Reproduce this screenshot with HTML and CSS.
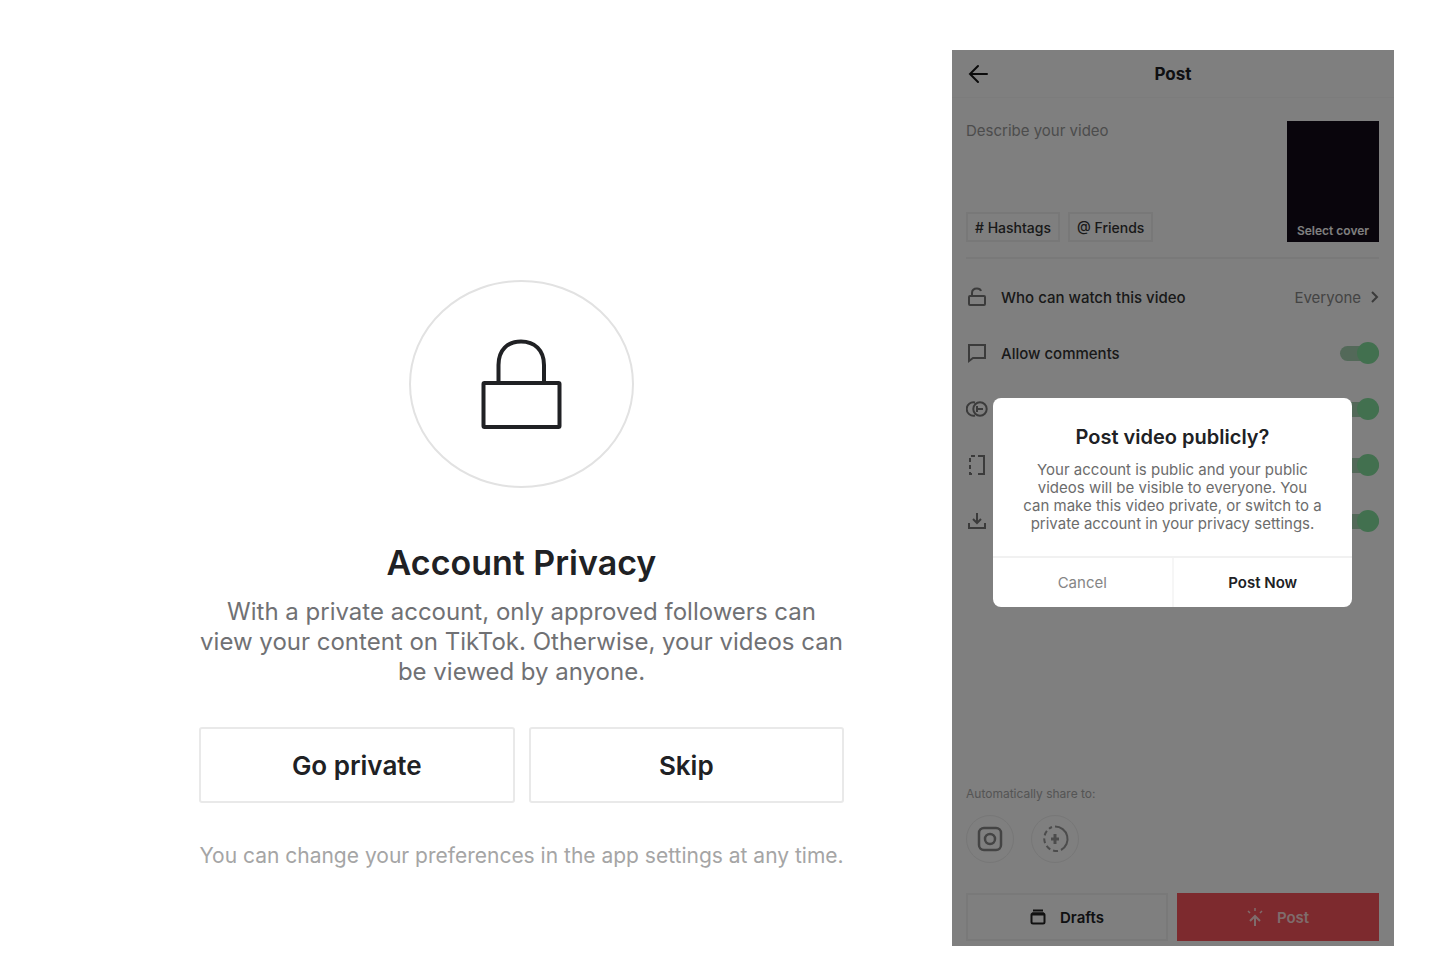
FILE: index.html
```html
<!DOCTYPE html>
<html lang="en">
<head>
<meta charset="utf-8">
<meta name="viewport" content="width=device-width, initial-scale=1">
<title>Account Privacy</title>
<link rel="stylesheet" href="styles.css">
</head>
<body>
<main class="page">
  <section class="privacy">
    <svg class="privacy-icon" viewBox="0 0 226 210" fill="none" aria-hidden="true">
      <ellipse cx="112.500" cy="105" rx="111.500" ry="103" stroke="#e2e2e2" stroke-width="2"/>
      <path d="M89.500 103V86C89.500 71 98.500 62.500 112 62.500S135 71 135 86V103" stroke="#202124" stroke-width="4"/>
      <rect x="74.500" y="104" width="76" height="44" rx="1" stroke="#202124" stroke-width="4"/>
    </svg>
    <h1 class="privacy-title">Account Privacy</h1>
    <p class="privacy-text">With a private account, only approved followers can<br>view your content on TikTok. Otherwise, your videos can<br>be viewed by anyone.</p>
    <div class="privacy-actions">
      <button class="choice" type="button">Go private</button>
      <button class="choice" type="button">Skip</button>
    </div>
    <p class="privacy-note">You can change your preferences in the app settings at any time.</p>
  </section>

  <section class="phone">
    <header class="bar">
      <button class="back" type="button" aria-label="Back">
        <svg width="22" height="22" viewBox="0 0 22 22" fill="none" stroke="#161616" stroke-width="2" stroke-linecap="round"><path d="M11 3L3 11L11 19M3 11H20"/></svg>
      </button>
      <h2 class="bar-title">Post</h2>
    </header>

    <div class="compose">
      <div class="compose-main">
        <textarea class="describe" aria-label="Describe your video" placeholder="Describe your video"></textarea>
        <div class="chips">
          <button class="chip" type="button"># Hashtags</button>
          <button class="chip" type="button">@ Friends</button>
        </div>
      </div>
      <button class="cover" type="button">Select cover</button>
    </div>

    <div class="settings">
      <button class="row" type="button">
        <svg class="row-icon" viewBox="0 0 22 22"><rect x="3" y="10" width="16" height="9" rx="1"/><path d="M6 10V7C6 3.500 8.500 2.500 11 2.500S14.500 3.500 15 5"/></svg>
        <span class="row-label">Who can watch this video</span>
        <span class="row-value">Everyone</span>
        <svg class="chevron" viewBox="0 0 8 14"><path d="M1 2L6 7L1 12"/></svg>
      </button>
      <label class="row">
        <svg class="row-icon" viewBox="0 0 22 22"><path d="M3 3H19V16H7L3 19Z"/></svg>
        <span class="row-label">Allow comments</span>
        <input class="toggle" type="checkbox" checked>
      </label>
      <div class="row">
        <svg class="row-icon" viewBox="0 0 22 22"><path d="M9 4.500A6.700 6.700 0 1 0 9 17.500M14 4.300A6.700 6.700 0 1 0 14 17.700A6.700 6.700 0 1 0 14 4.300M11 8V14M12 11H17"/></svg>
        <span class="row-label"></span>
        <input class="toggle" type="checkbox" aria-label="Duet" checked>
      </div>
      <div class="row">
        <svg class="row-icon" viewBox="0 0 22 22"><path d="M12 2H18V20H12"/><path stroke-dasharray="4 3" d="M9 2H4V20H9"/></svg>
        <span class="row-label"></span>
        <input class="toggle" type="checkbox" aria-label="Stitch" checked>
      </div>
      <div class="row">
        <svg class="row-icon" viewBox="0 0 22 22"><path d="M11 3V13M7 9L11 13L15 9M3 13V18H19V13"/></svg>
        <span class="row-label"></span>
        <input class="toggle" type="checkbox" aria-label="Save to device" checked>
      </div>
    </div>

    <div class="share">
      <p class="share-title">Automatically share to:</p>
      <div class="share-list">
        <button class="share-item" type="button" aria-label="Instagram">
          <svg width="28" height="28" viewBox="0 0 28 28" fill="none" stroke="#888" stroke-width="2.500"><rect x="3" y="3" width="22" height="22" rx="5"/><circle cx="14" cy="14" r="5"/></svg>
        </button>
        <button class="share-item" type="button" aria-label="Stories">
          <svg width="30" height="30" viewBox="0 0 30 30" fill="none" stroke="#999" stroke-width="2"><path d="M15 2.500A12.500 12.500 0 0 1 21 26"/><path stroke-dasharray="5 3" d="M18 27A12.500 12.500 0 0 1 12 3"/><path d="M15 10V20M11 15H19" stroke-width="3"/></svg>
        </button>
      </div>
    </div>

    <footer class="foot">
      <button class="foot-btn drafts" type="button">
        <svg width="16" height="16" viewBox="0 0 16 16" fill="none" stroke="#222" stroke-width="2"><path d="M3 1.500H13" /><rect x="1.500" y="4.500" width="13" height="10" rx="1.500"/><path d="M2 5H14" stroke-width="3"/></svg>
        Drafts
      </button>
      <button class="foot-btn publish" type="button">
        <svg width="16" height="20" viewBox="0 0 16 20" fill="none" stroke="#ffd8d8" stroke-width="2"><path d="M8 19V9M3 14L8 9L13 14"/><path d="M8 1V4M1 4L3 6M15 4L13 6" stroke-width="1.500"/></svg>
        Post
      </button>
    </footer>

    <div class="scrim"></div>
    <div class="dialog" role="dialog" aria-labelledby="dialog-title">
      <div class="dialog-body">
        <h2 class="dialog-title" id="dialog-title">Post video publicly?</h2>
        <p class="dialog-text">Your account is public and your public<br>videos will be visible to everyone. You<br>can make this video private, or switch to a<br>private account in your privacy settings.</p>
      </div>
      <div class="dialog-actions">
        <button class="dialog-btn" type="button">Cancel</button>
        <button class="dialog-btn dialog-btn-main" type="button">Post Now</button>
      </div>
    </div>
  </section>
</main>
</body>
</html>
```

FILE: styles.css
```css
* { box-sizing: border-box; }

body {
  margin: 0;
  background: #fff;
  color: #202124;
  font-family: Inter, "Liberation Sans", sans-serif;
}

h1, h2, p { margin: 0; }

button {
  margin: 0;
  padding: 0;
  border: 0;
  background: none;
  color: inherit;
  font: inherit;
}

.page {
  display: grid;
  grid-template-columns: 645fr 442fr;
  gap: 108px;
  min-height: 100vh;
  padding: 50px 36px 34px 199px;
}

/* Account privacy prompt */
.privacy {
  display: flex;
  flex-direction: column;
  align-items: center;
  padding-top: 229px;
  text-align: center;
}

.privacy-icon { width: 226px; height: 210px; }

.privacy-title {
  margin-top: 54px;
  font-size: 34px;
  font-weight: 600;
  line-height: 40px;
}

.privacy-text {
  margin-top: 14px;
  color: #707174;
  font-size: 24px;
  line-height: 30px;
  white-space: nowrap;
}

.privacy-actions {
  display: flex;
  gap: 14px;
  width: 100%;
  margin-top: 40px;
}

.choice {
  flex: 1;
  height: 76px;
  border: 2px solid #e9e9e9;
  border-radius: 3px;
  font-size: 26px;
  font-weight: 600;
}

.privacy-note {
  margin-top: 38px;
  color: #a5a5a5;
  font-size: 21px;
  line-height: 30px;
  white-space: nowrap;
}

/* Post screen */
.phone {
  position: relative;
  display: flex;
  flex-direction: column;
  background: #fefefe;
}

.bar {
  display: grid;
  grid-template-columns: 22px 1fr 22px;
  align-items: center;
  height: 48px;
  padding: 0 15px;
  border-bottom: 1px solid #f8f8f8;
}

.back { height: 22px; }

.bar-title {
  font-size: 17px;
  font-weight: 700;
  text-align: center;
}

.compose {
  display: flex;
  margin: 23px 15px 0 14px;
  padding-bottom: 15px;
  border-bottom: 2px solid #f2f2f2;
}

.compose-main {
  display: flex;
  flex: 1;
  flex-direction: column;
}

.describe {
  flex: 1;
  padding: 0;
  border: 0;
  background: none;
  font: 15px/20px Inter, "Liberation Sans", sans-serif;
  resize: none;
}

.describe::placeholder { color: #999; }

.chips { display: flex; gap: 8px; }

.chip {
  height: 30px;
  padding: 0 7px;
  border: 2px solid #f1f1f1;
  color: #333;
  font-size: 14px;
  font-weight: 500;
}

.cover {
  display: flex;
  align-items: flex-end;
  justify-content: center;
  width: 92px;
  height: 121px;
  padding-bottom: 4px;
  background: #120a18;
  color: #fff;
  font-size: 12px;
  font-weight: 600;
}

.settings { padding: 10px 15px 0 14px; }

.row {
  display: flex;
  align-items: center;
  width: 100%;
  height: 56px;
  text-align: left;
}

.row-icon {
  width: 22px;
  height: 22px;
  margin-right: 13px;
  fill: none;
  stroke: #777;
  stroke-width: 2;
}

.row-label {
  flex: 1;
  color: #333;
  font-size: 15px;
  font-weight: 500;
}

.row-value { color: #888; font-size: 15px; }

.chevron {
  width: 8px;
  height: 14px;
  margin-left: 10px;
  fill: none;
  stroke: #777;
  stroke-width: 2;
}

.toggle {
  display: flex;
  align-items: center;
  justify-content: flex-end;
  width: 39px;
  height: 15px;
  margin: 0;
  border-radius: 8px;
  background: #a6d2b2;
  appearance: none;
}

.toggle::before {
  width: 22px;
  height: 22px;
  flex: none;
  border-radius: 50%;
  background: #84e09e;
  content: "";
}

.share { margin-top: auto; padding: 0 14px; }

.share-title {
  color: #aaa;
  font-size: 12px;
  line-height: 16px;
}

.share-list {
  display: flex;
  gap: 17px;
  margin-top: 13px;
}

.share-item {
  display: grid;
  place-items: center;
  width: 48px;
  height: 48px;
  border: 1px solid #eee;
  border-radius: 50%;
}

.foot {
  display: grid;
  grid-template-columns: 1fr 1fr;
  gap: 9px;
  padding: 30px 15px 5px 14px;
}

.foot-btn {
  display: flex;
  align-items: center;
  justify-content: center;
  gap: 14px;
  height: 48px;
  font-size: 15px;
  font-weight: 600;
}

.drafts { border: 2px solid #f2f2f2; }

.publish { background: #fb545c; color: #ffd8d8; }

.scrim {
  position: absolute;
  inset: 0;
  background: rgba(0, 0, 0, 0.5);
}

.dialog {
  position: absolute;
  top: 348px;
  right: 42px;
  left: 41px;
  border-radius: 8px;
  background: #fff;
  text-align: center;
}

.dialog-body { padding: 26px 12px 23px; }

.dialog-title {
  font-size: 20px;
  font-weight: 600;
  line-height: 26px;
}

.dialog-text {
  margin-top: 11px;
  color: #6c6c6c;
  font-size: 15px;
  line-height: 18px;
  white-space: nowrap;
}

.dialog-actions {
  display: flex;
  border-top: 2px solid #f1f1f1;
}

.dialog-btn {
  flex: 1;
  height: 49px;
  color: #858585;
  font-size: 15px;
}

.dialog-btn-main {
  border-left: 2px solid #f6f6f6;
  color: #202124;
  font-weight: 600;
}
```
